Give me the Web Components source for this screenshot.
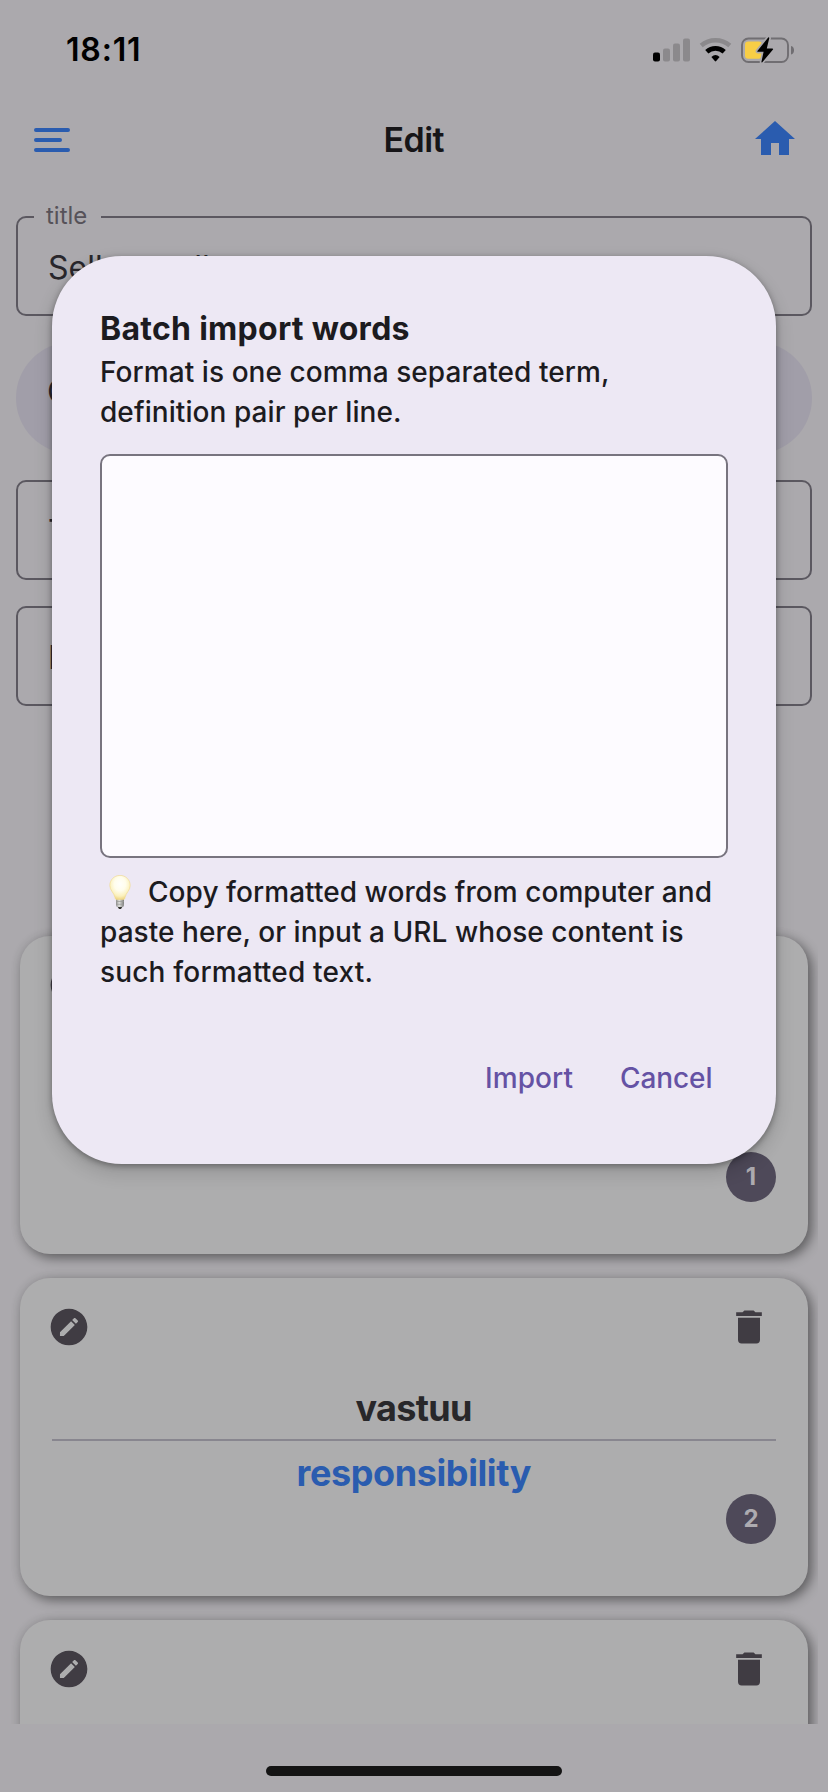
<!DOCTYPE html>
<html lang="en">
<head>
<meta charset="utf-8">
<title>Edit</title>
<style>
  html, body { margin: 0; padding: 0; }
  body { width: 828px; height: 1792px; overflow: hidden; background: #aba9ad; font-family: Inter, "Liberation Sans", sans-serif; }
</style>
</head>
<body>
<edit-screen></edit-screen>
<script>
const define = (name, html, setup) => {
  const template = document.createElement('template');
  template.innerHTML = html;
  customElements.define(name, class extends HTMLElement {
    connectedCallback() {
      if (this.shadowRoot) return;
      this.attachShadow({ mode: 'open' }).append(template.content.cloneNode(true));
      if (setup) setup(this, this.shadowRoot);
    }
  });
};

/* One line of text, tracked to an exact advance width. */
define('text-line', `
<style>:host{display:block;white-space:nowrap} span{display:inline-block}</style><span><slot></slot></span>`,
(host, root) => {
  const span = root.querySelector('span');
  const want = +host.getAttribute('width');
  const n = host.textContent.length;
  if (!want || n < 2) return;
  const step = (want - span.getBoundingClientRect().width) / (n - 1);
  span.style.letterSpacing = step.toFixed(3) + 'px';
  span.style.marginRight = (-step).toFixed(3) + 'px';
});

define('status-bar', `
<style>
:host{display:flex;height:99px;box-sizing:border-box;padding:0 34px 0 66px;justify-content:space-between;align-items:center;color:#000;font-size:32px;font-weight:600;line-height:40px}
svg{display:block}
</style>
<text-line width="74.500">18:11</text-line>
<svg width="142" height="26" viewBox="652 36.5 142 26">
  <rect x="653" y="52" width="7" height="9" rx="2"/>
  <g fill="#8b898c"><rect x="663" y="48" width="7" height="13" rx="2"/><rect x="673" y="43" width="7" height="18" rx="2"/><rect x="683" y="38" width="7" height="23" rx="2"/></g>
  <path d="M701.2 45A22 22 0 0 1 729.8 45" fill="none" stroke="#8b898c" stroke-width="4.6"/>
  <path d="M706.8 51.2A13.2 13.2 0 0 1 724.2 51.2" fill="none" stroke="#000" stroke-width="4.8"/>
  <path d="M711.4 56.4Q715.500 52.400 719.600 56.400L716.200 60.500Q715.500 61.300 714.800 60.500Z"/>
  <rect x="742" y="38" width="46" height="23.500" rx="6.500" fill="none" stroke="#706e72" stroke-width="1.900"/>
  <path d="M791 45.500C793.200 46 794 47.800 794 49.700S793.200 53.500 791 54Z" fill="#706e72"/>
  <rect x="745" y="41" width="17" height="17.200" rx="3.200" fill="#f8ce46"/>
  <path d="M768.200 37L757.400 50.500Q757 51.300 757.800 51.300H763.600L761.400 61.500Q761.600 62.300 762.300 61.700L773 49Q773.500 48 772.400 48H766.800L769.300 37.600Q769 36.400 768.200 37Z" stroke="#aba9ad" stroke-width="3.400" paint-order="stroke" fill="#000"/>
</svg>`);

define('app-header', `
<style>
:host{display:grid;grid-template-columns:48px 1fr 48px;align-items:center;height:82px;padding:0 29px 0 28px;color:#161518;font-size:34px;font-weight:600;line-height:44px}
.title{justify-self:center;padding-left:1px}
.home{margin-top:-2px}
svg{display:block}
</style>
<svg width="48" height="48" viewBox="0 0 48 48" stroke="#2a5caf" stroke-width="4" stroke-linecap="round"><path d="M8 14H40M8 24H32M8 34H40"/></svg>
<div class="title"><slot></slot></div>
<svg class="home" width="48" height="48" viewBox="0 0 24 24"><path fill="#2a5caf" d="M10,20V14H14V20H19V12H22L12,3L2,12H5V20H10Z"/></svg>`);

define('outlined-field', `
<style>
:host{display:block;position:relative;box-sizing:border-box;height:100px;border:2px solid #5b5860;border-radius:10px;padding:30px 30px 0;font-size:32px;line-height:40px;color:#29272c}
.label{position:absolute;left:16px;top:-17px;width:67px;box-sizing:border-box;padding-left:12px;background:#aba9ad;font-size:24px;line-height:30px;color:#565259}
.label:empty{display:none}
</style>
<div class="label"></div><slot></slot>`,
(host, root) => { root.querySelector('.label').textContent = host.getAttribute('label') || ''; });

define('pill-button', `
<style>:host{display:block;box-sizing:border-box;height:112px;border-radius:56px;background:#a19ea9;padding:30px 31px;font-size:32px;line-height:40px;color:#29272c}</style><slot></slot>`);

define('word-card', `
<style>
:host{display:grid;grid-template-rows:98px 63px 2px 64px 1fr;box-sizing:border-box;height:318px;flex:none;border-radius:30px;background:#adadae;padding:0 32px;
 box-shadow:4px 4px 12px rgba(0,0,0,.42),0 0 12px rgba(0,0,0,.08);text-align:center;font-size:36px;font-weight:700;line-height:44px;color:#28272a;position:relative}
.tools{display:flex;justify-content:space-between;align-items:center;margin:0 5px 0 -5px}
.tools svg{width:44px;height:44px;fill:#403c43;display:block}
.term{padding-top:10px}
.rule{background:#88868f}
.def{color:#2a5caf;padding-top:10px}
.badge{position:absolute;right:32px;bottom:52px;width:50px;height:50px;border-radius:50%;background:#4e4959;color:#adabb0;font-size:24px;line-height:50px}
.badge:empty{display:none}
</style>
<div class="tools">
<svg viewBox="0 0 24 24"><path d="M12,2C6.47,2 2,6.47 2,12C2,17.53 6.47,22 12,22C17.53,22 22,17.53 22,12C22,6.47 17.53,2 12,2M15.1,7.07C15.24,7.07 15.38,7.12 15.5,7.23L16.77,8.5C17,8.72 17,9.07 16.77,9.28L15.77,10.28L13.72,8.23L14.72,7.23C14.82,7.12 14.96,7.07 15.1,7.07M13.13,8.81L15.19,10.87L9.13,16.93H7.07V14.87L13.13,8.81Z"/></svg>
<svg viewBox="0 0 24 24"><path d="M19,4H15.5L14.5,3H9.5L8.5,4H5V6H19V4M6,19A2,2 0 0,0 8,21H16A2,2 0 0,0 18,19V7H6V19Z"/></svg>
</div>
<div class="term"><slot name="term"></slot></div><div class="rule"></div><div class="def"><slot name="def"></slot></div>
<div class="badge"></div>`,
(host, root) => { root.querySelector('.badge').textContent = host.getAttribute('number') || ''; });

define('light-bulb', `
<style>:host{display:inline-block;width:22px;height:34px} svg{display:block}</style>
<svg width="22" height="34" viewBox="0 0 22 34">
<defs>
<radialGradient id="g" cx=".5" cy=".36" r=".62"><stop offset="0" stop-color="#fffffb"/><stop offset=".45" stop-color="#fffdec"/><stop offset=".8" stop-color="#fbf1bd"/><stop offset="1" stop-color="#f0d98a"/></radialGradient>
<linearGradient id="m"><stop offset="0" stop-color="#8b8b88"/><stop offset=".4" stop-color="#e2e2df"/><stop offset="1" stop-color="#7b7b79"/></linearGradient>
</defs>
<path d="M7 23.500H15V30Q15 32 12.500 32.500H9.500Q7 32 7 30Z" fill="url(#m)"/>
<path d="M7 26.500H15M7 29.300H15" stroke="#9a9a96" stroke-width=".7"/>
<path d="M8.800 32H13.200L12 34H10Z" fill="#34332f"/>
<path d="M11 .4C5.200.4.800 4.900.800 10.400C.800 15.500 5 17.500 6 22.500C6.200 24 6.600 24.600 8 24.600H14C15.400 24.600 15.800 24 16 22.500C17 17.500 21.200 15.500 21.200 10.400C21.200 4.900 16.800.4 11 .4Z" fill="url(#g)" stroke="#f0d98c" stroke-width=".6"/>
</svg>`);

define('import-dialog', `
<style>
:host{display:flex;flex-direction:column;box-sizing:border-box;width:724px;height:908px;border-radius:70px;background:#ede8f4;padding:50px 48px 0;color:#1c1b1f;
 box-shadow:0 2px 6px rgba(0,0,0,.36),0 8px 16px 4px rgba(0,0,0,.11);font-size:28px;font-weight:500;line-height:40px}
h2{margin:0;font-size:32px;line-height:46px;font-weight:700}
.area{box-sizing:border-box;height:404px;border:2px solid #78747f;border-radius:10px;background:#fdfbff;margin:22px 0 14px}
.tip{display:flex;align-items:center}
light-bulb{margin:0 17px 0 9px;flex:none}
.actions{display:flex;justify-content:flex-end;gap:47px;margin-top:66px;padding-right:15.500px;color:#6552a4}
</style>
<h2><text-line width="309.500">Batch import words</text-line></h2>
<text-line width="509.500">Format is one comma separated term,</text-line>
<text-line width="301.500">definition pair per line.</text-line>
<div class="area"></div>
<div class="tip"><light-bulb></light-bulb><text-line width="564">Copy formatted words from computer and</text-line></div>
<text-line width="583.500">paste here, or input a URL whose content is</text-line>
<text-line width="273">such formatted text.</text-line>
<div class="actions"><text-line width="88">Import</text-line><text-line width="92.500">Cancel</text-line></div>`);

define('edit-screen', `
<style>
:host{display:flex;flex-direction:column;position:relative;width:828px;height:1792px;overflow:hidden}
.form{display:flex;flex-direction:column;gap:26px;padding:35px 16px 0}
.list{display:flex;flex-direction:column;gap:24px;box-sizing:border-box;margin:194px 10px 0;height:824px;padding:36px 10px 0;overflow:hidden}
.indicator{width:296px;height:10px;border-radius:5px;background:#141414;margin:42px auto 0}
import-dialog{position:absolute;left:52px;top:256px}
</style>
<status-bar></status-bar>
<app-header><text-line width="61">Edit</text-line></app-header>
<div class="form">
<outlined-field label="title">Sellosanella</outlined-field>
<pill-button>C</pill-button>
<outlined-field>T</outlined-field>
<outlined-field>D</outlined-field>
</div>
<div class="list">
<word-card number="1"></word-card>
<word-card number="2"><text-line slot="term" width="117">vastuu</text-line><text-line slot="def" width="235">responsibility</text-line></word-card>
<word-card></word-card>
</div>
<div class="indicator"></div>
<import-dialog></import-dialog>`);
</script>
</body>
</html>
